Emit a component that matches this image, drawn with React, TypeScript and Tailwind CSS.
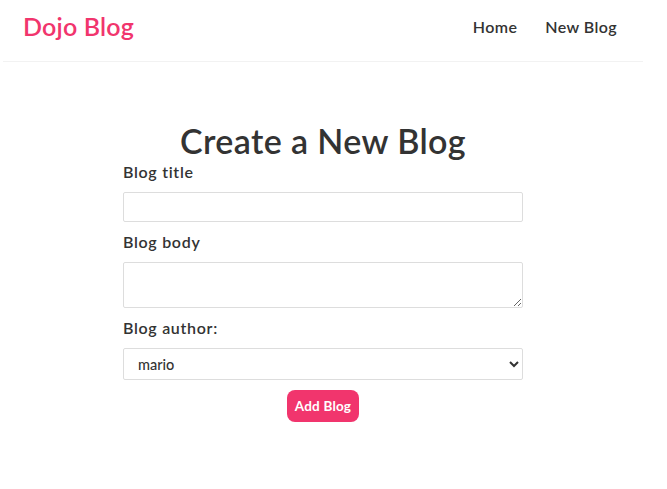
import { useState } from 'react';

export default function App() {
  const [title, setTitle] = useState('');
  const [body, setBody] = useState('');
  const [author, setAuthor] = useState('mario');

  return (
    <div className="min-h-screen bg-white font-['Lato',sans-serif] text-[#333]">
      <div className="w-[646px]">
        {/* Navbar */}
        <nav className="ml-[3px] w-[640px] h-[62px] px-5 pb-2 flex items-center border-b border-[#f2f2f2]">
          <h1 className="text-[25px] font-semibold text-[#f1356d] leading-none tracking-[0.2px]">Dojo Blog</h1>
          <div className="ml-auto flex items-center">
            <a href="#" className="ml-4 p-1.5 text-[16px] font-semibold tracking-[0.4px]">Home</a>
            <a href="#" className="ml-4 p-1.5 text-[16px] font-semibold tracking-[0.4px]">New Blog</a>
          </div>
        </nav>

        {/* Create form */}
        <div className="w-[400px] mx-auto pt-[58px] text-center">
          <h2 className="text-[34px] font-semibold leading-[42px] tracking-[0.4px]">Create a New Blog</h2>
          <form className="text-left" onSubmit={(e) => e.preventDefault()}>
            <label className="block text-[16px] font-semibold leading-[20px] tracking-[0.7px]">Blog title</label>
            <input
              type="text"
              value={title}
              onChange={(e) => setTitle(e.target.value)}
              className="block w-full h-[30px] my-2.5 px-2.5 border border-[#ddd] rounded-[2px]"
            />
            <label className="block text-[16px] font-semibold leading-[20px] tracking-[0.7px]">Blog body</label>
            <textarea
              value={body}
              onChange={(e) => setBody(e.target.value)}
              className="block w-full h-[46px] my-2.5 px-2.5 py-1.5 border border-[#ddd] rounded-[2px]"
            />
            <label className="block text-[16px] font-semibold leading-[20px] mt-[8px] tracking-[0.7px]">Blog author:</label>
            <select
              value={author}
              onChange={(e) => setAuthor(e.target.value)}
              className="block w-full h-[32px] mt-2.5 mb-2.5 px-2.5 border border-[#ddd] rounded-[2px] text-[14.5px] font-medium"
            >
              <option value="mario">mario</option>
              <option value="yoshi">yoshi</option>
            </select>
            <div className="text-center">
              <button className="bg-[#f1356d] text-white text-[13.5px] font-bold px-2 h-[32px] rounded-lg tracking-[0.2px]">
                Add Blog
              </button>
            </div>
          </form>
        </div>
      </div>
    </div>
  );
}
